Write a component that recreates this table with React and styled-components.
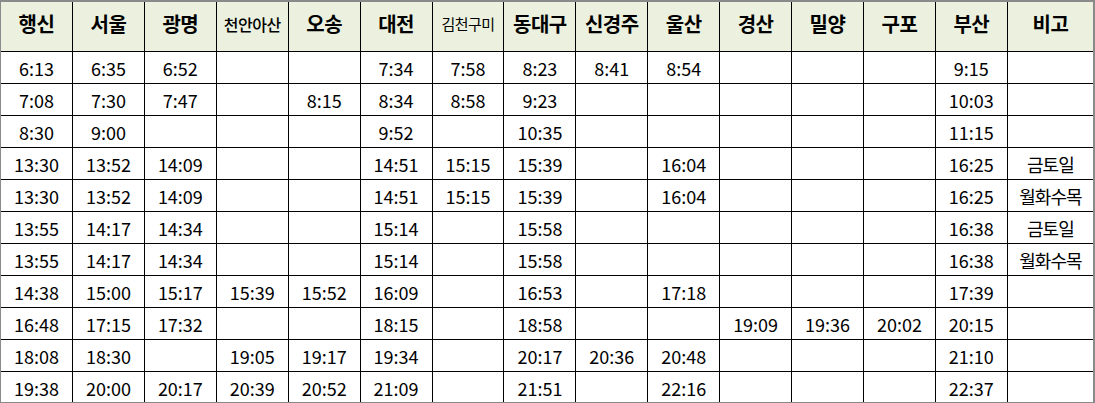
import React from 'react';
import styled, { createGlobalStyle } from 'styled-components';

const GlobalStyle = createGlobalStyle`
  html, body {
    margin: 0;
    padding: 0;
    background: #fff;
  }
  body {
    font-family: "Noto Sans CJK KR", "Noto Sans", sans-serif;
    color: #000;
  }
`;

const Sheet = styled.div`
  box-sizing: border-box;
  width: 1095px;
  height: 403px;
  display: grid;
  grid-template-columns: 72px repeat(13, 71.92px) 1fr;
  grid-template-rows: 50px repeat(10, 32px) 1fr;
  border: 1px solid #8a8a8a;
  border-top-width: 2px;
  border-right-width: 2px;
  background: #fff;
`;

const BaseCell = styled.div`
  box-sizing: border-box;
  display: flex;
  align-items: center;
  justify-content: center;
  white-space: nowrap;
  overflow: hidden;
  border-right: ${p => (p.$lastCol ? 'none' : '1px solid #000')};
  border-bottom: ${p => (p.$lastRow ? 'none' : '1px solid #000')};
`;

const HeadCell = styled(BaseCell)`
  background: #ebf1de;
  font-size: ${p => p.$size || 20}px;
  font-weight: ${p => p.$weight || 700};
  padding-bottom: 6px;
  letter-spacing: -0.5px;
`;

const Cell = styled(BaseCell)`
  font-size: 18px;
  font-weight: 400;
  letter-spacing: ${p => (p.$note ? '-1px' : '0')};
  padding-top: 1px;
`;

const headers = [
  { label: '행신' },
  { label: '서울' },
  { label: '광명' },
  { label: '천안아산', size: 16, weight: 500 },
  { label: '오송' },
  { label: '대전' },
  { label: '김천구미', size: 15, weight: 400 },
  { label: '동대구' },
  { label: '신경주' },
  { label: '울산' },
  { label: '경산' },
  { label: '밀양' },
  { label: '구포' },
  { label: '부산' },
  { label: '비고' },
];

const rows = [
  ['6:13', '6:35', '6:52', '', '', '7:34', '7:58', '8:23', '8:41', '8:54', '', '', '', '9:15', ''],
  ['7:08', '7:30', '7:47', '', '8:15', '8:34', '8:58', '9:23', '', '', '', '', '', '10:03', ''],
  ['8:30', '9:00', '', '', '', '9:52', '', '10:35', '', '', '', '', '', '11:15', ''],
  ['13:30', '13:52', '14:09', '', '', '14:51', '15:15', '15:39', '', '16:04', '', '', '', '16:25', '금토일'],
  ['13:30', '13:52', '14:09', '', '', '14:51', '15:15', '15:39', '', '16:04', '', '', '', '16:25', '월화수목'],
  ['13:55', '14:17', '14:34', '', '', '15:14', '', '15:58', '', '', '', '', '', '16:38', '금토일'],
  ['13:55', '14:17', '14:34', '', '', '15:14', '', '15:58', '', '', '', '', '', '16:38', '월화수목'],
  ['14:38', '15:00', '15:17', '15:39', '15:52', '16:09', '', '16:53', '', '17:18', '', '', '', '17:39', ''],
  ['16:48', '17:15', '17:32', '', '', '18:15', '', '18:58', '', '', '19:09', '19:36', '20:02', '20:15', ''],
  ['18:08', '18:30', '', '19:05', '19:17', '19:34', '', '20:17', '20:36', '20:48', '', '', '', '21:10', ''],
  ['19:38', '20:00', '20:17', '20:39', '20:52', '21:09', '', '21:51', '', '22:16', '', '', '', '22:37', ''],
];

export default function App() {
  const lastCol = headers.length - 1;
  const lastRow = rows.length - 1;

  return (
    <>
      <GlobalStyle />
      <Sheet>
        {headers.map((h, i) => (
          <HeadCell key={h.label} $size={h.size} $weight={h.weight} $lastCol={i === lastCol}>
            {h.label}
          </HeadCell>
        ))}
        {rows.map((row, r) =>
          row.map((value, c) => (
            <Cell
              key={`${r}-${c}`}
              $lastCol={c === lastCol}
              $lastRow={r === lastRow}
              $note={c === lastCol}
            >
              {value}
            </Cell>
          ))
        )}
      </Sheet>
    </>
  );
}
